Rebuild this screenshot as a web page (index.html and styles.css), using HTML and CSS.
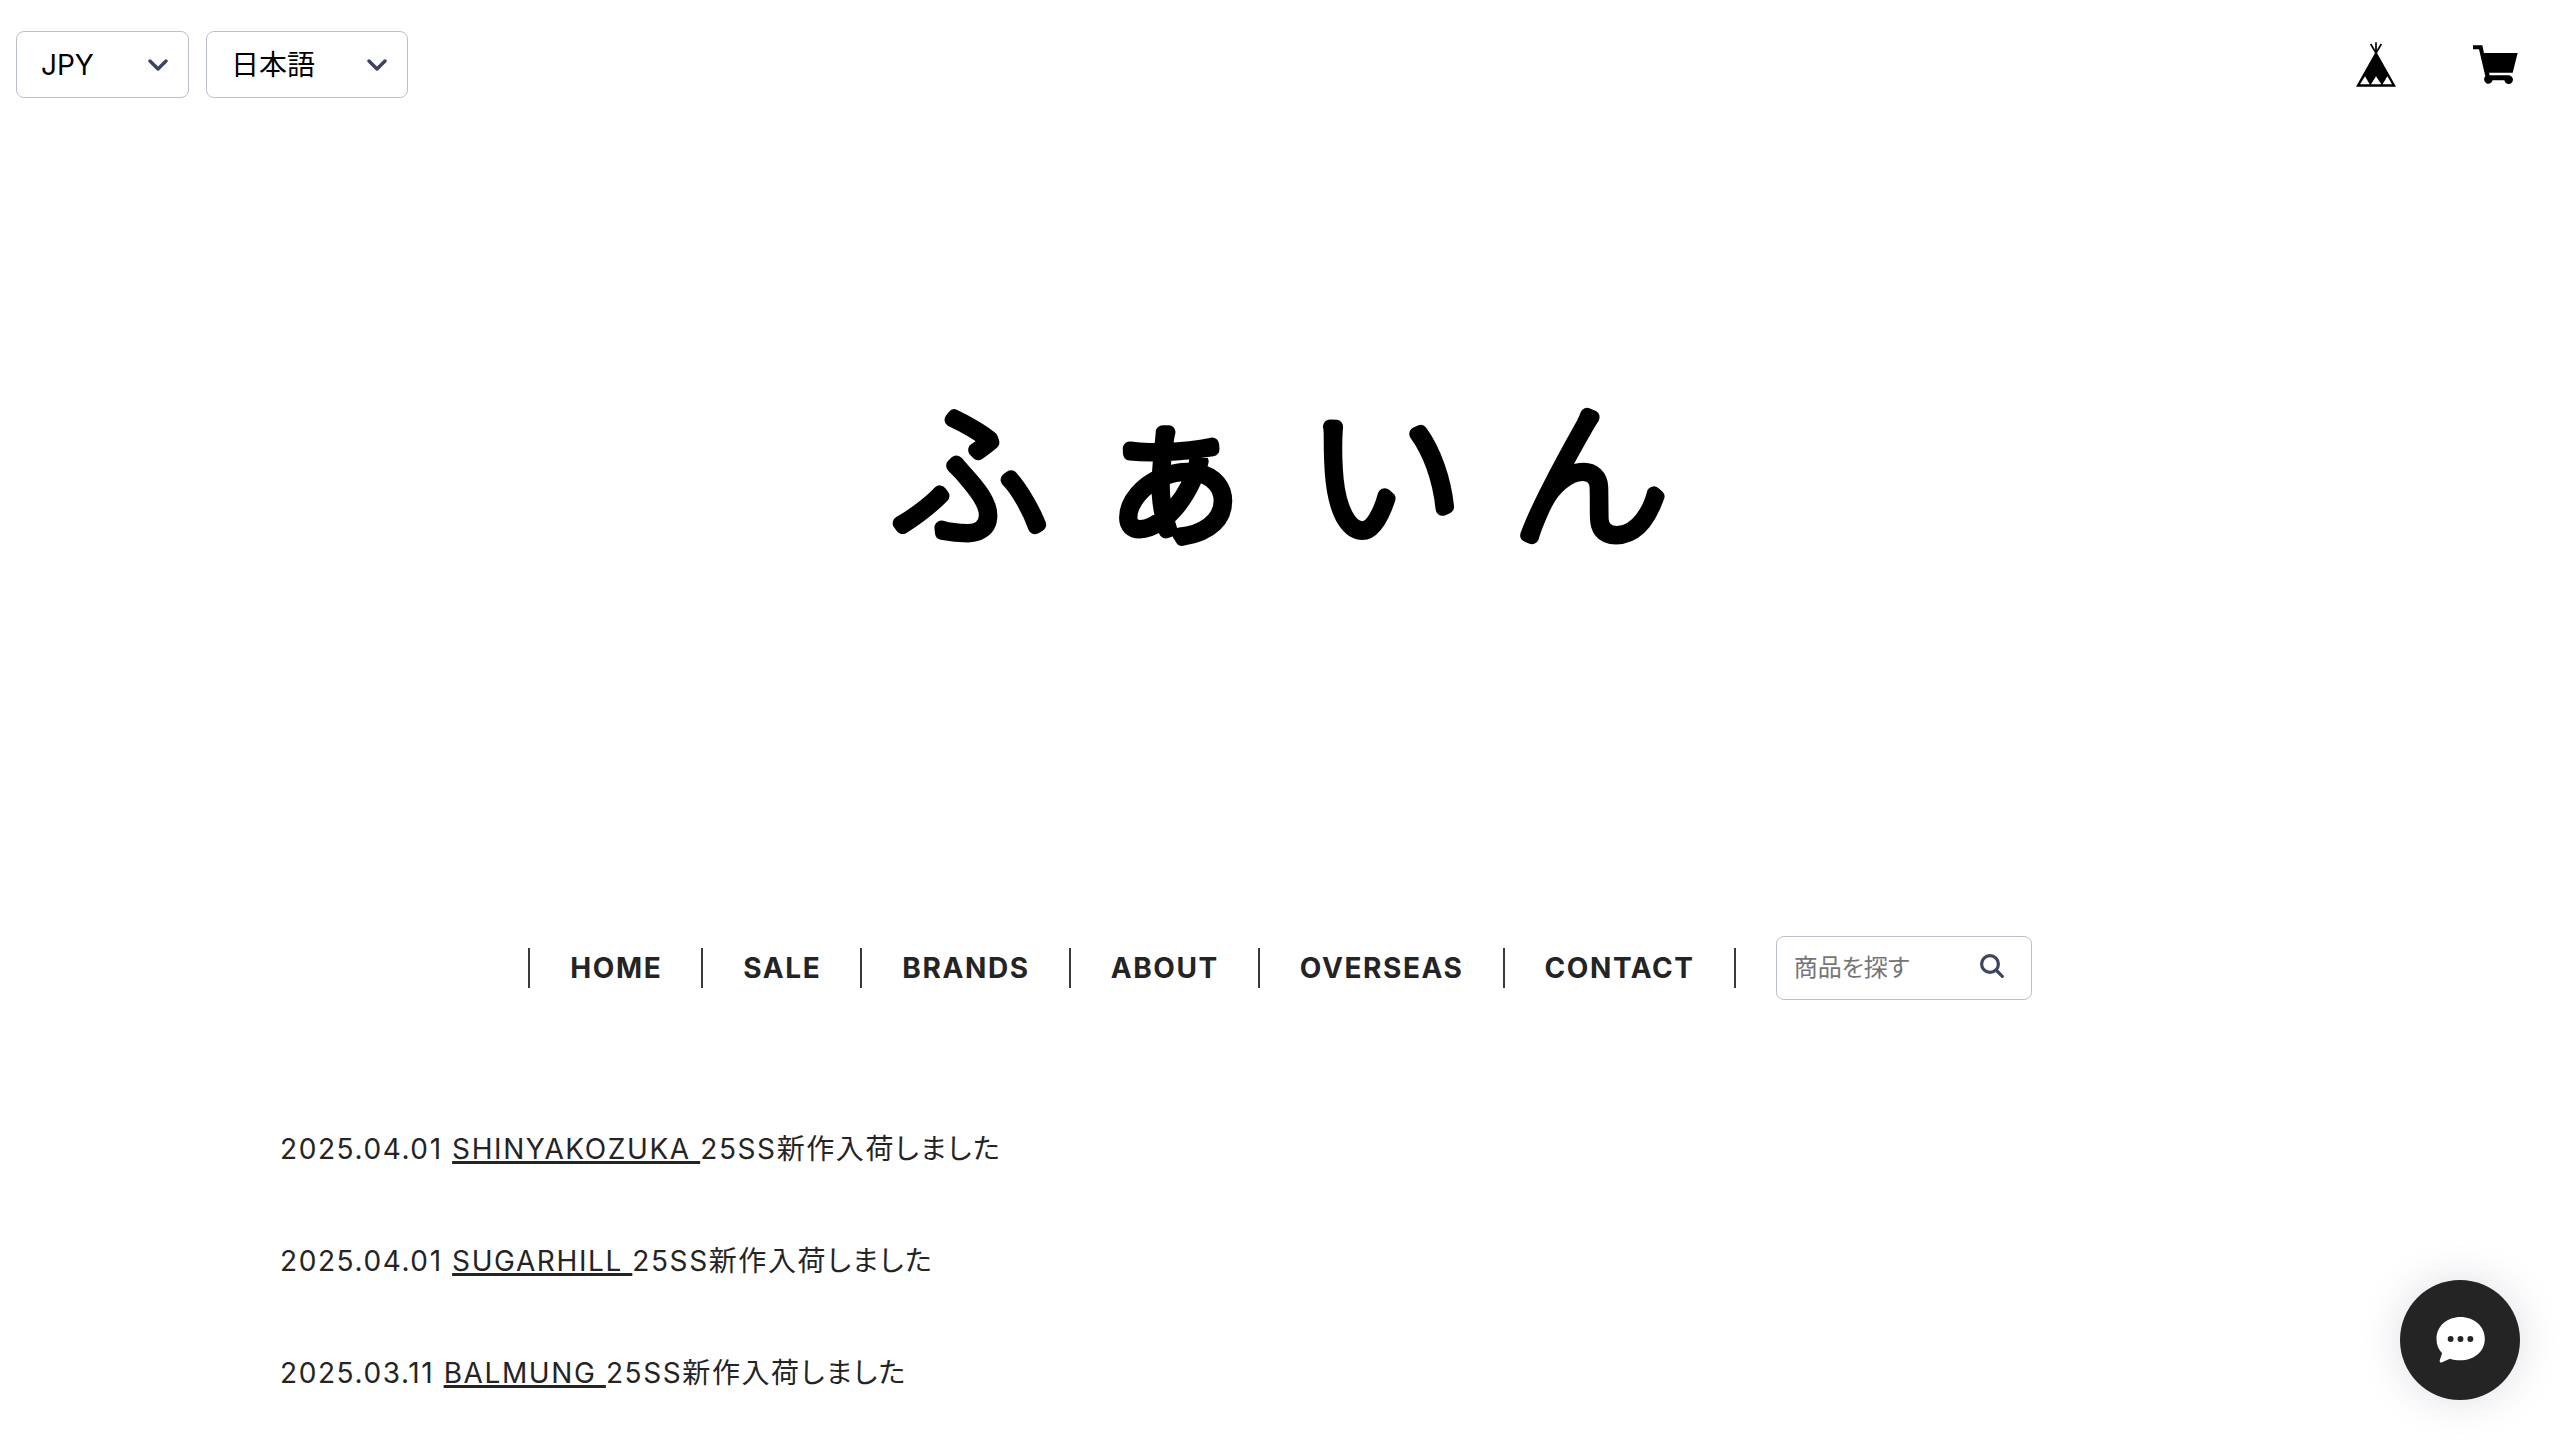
FILE: index.html
```html
<!DOCTYPE html>
<html lang="ja">
<head>
<meta charset="utf-8">
<meta name="viewport" content="width=device-width, initial-scale=1">
<title>ふぁいん</title>
<link rel="stylesheet" href="styles.css">
</head>
<body>
<header class="topbar">
  <div class="pickers">
    <div class="picker">
      <select class="picker-select picker-currency" aria-label="通貨"><option>JPY</option></select>
      <svg class="chevron" viewBox="0 0 20 12" aria-hidden="true"><path d="M2 2l8 8 8-8"/></svg>
    </div>
    <div class="picker">
      <select class="picker-select picker-language" aria-label="言語"><option>日本語</option></select>
      <svg class="chevron" viewBox="0 0 20 12" aria-hidden="true"><path d="M2 2l8 8 8-8"/></svg>
    </div>
  </div>
  <div class="shortcuts">
    <a href="#" aria-label="BASE"><svg class="tent" viewBox="106 65 120 135" aria-hidden="true">
      <path fill-rule="evenodd" d="M166 93L226 199H106ZM118 192H147L133 168ZM151 192H182L166 168ZM186 192H214L200 168Z"/>
      <path class="poles" d="M166 66V98M150 71L166 98L182 71"/>
    </svg></a>
    <a href="#" aria-label="カート"><svg class="cart" viewBox="459 74 135 117" aria-hidden="true">
      <path d="M459 75H487L492 98H593L578 157H507L509 165H564A13 13 0 1 1 553 180H518A13 13 0 1 1 496 168L477 87H459Z"/>
    </svg></a>
  </div>
</header>

<h1 class="logo">
  <a href="#"><svg class="logo-mark" viewBox="0 0 800 240">
    <text y="183" x="11 215 427 632">ふぁいん</text>
  </svg></a>
</h1>

<div class="menu">
  <nav>
    <ul class="menu-list">
      <li><a href="#">HOME</a></li>
      <li><a href="#">SALE</a></li>
      <li><a href="#">BRANDS</a></li>
      <li><a href="#">ABOUT</a></li>
      <li><a href="#">OVERSEAS</a></li>
      <li><a href="#">CONTACT</a></li>
    </ul>
  </nav>
  <form class="search">
    <input class="search-input" type="search" placeholder="商品を探す" aria-label="商品を探す">
    <button class="search-button" type="submit" aria-label="検索"><svg class="search-icon" viewBox="0 0 24 24" aria-hidden="true"><circle cx="10" cy="10" r="8.4"/><path d="M16.5 16.5L22.3 22.3"/></svg></button>
  </form>
</div>

<main class="news">
  <p>2025.04.01 <a href="#">SHINYAKOZUKA </a>25SS新作入荷しました</p>
  <p>2025.04.01 <a href="#">SUGARHILL </a>25SS新作入荷しました</p>
  <p>2025.03.11 <a href="#">BALMUNG </a>25SS新作入荷しました</p>
</main>

<button class="chat" type="button" aria-label="チャット"><svg class="chat-icon" viewBox="194 198 148 140" aria-hidden="true">
  <path class="bubble" d="M268 198C308 198 342 225 342 265C342 304 308 330 268 330C256 330 245 328 236 325L212 336Q203 339 205 330L212 308C201 297 195 283 195 265C195 225 228 198 268 198Z"/>
  <g class="dots"><circle cx="238" cy="265" r="9"/><circle cx="268" cy="265" r="9"/><circle cx="298" cy="265" r="9"/></g>
</svg></button>
</body>
</html>
```
FILE: styles.css
```css
* { box-sizing: border-box; }

body {
  margin: 0;
  background: #fff;
  color: #242424;
  font: 28px/56px Inter, "Noto Sans CJK JP", sans-serif;
  font-feature-settings: "palt";
}

a { color: inherit; }

.topbar {
  display: flex;
  justify-content: space-between;
  padding: 31px 42px 0 16px;
}

.pickers { display: flex; gap: 17px; }

.picker { display: grid; align-items: center; }

.picker > * { grid-area: 1 / 1; }

.picker-select {
  appearance: none;
  height: 67px;
  padding: 0 24px;
  border: 1px solid #b9bfcd;
  border-radius: 8px;
  background: #fff;
  color: #000;
  font: inherit;
  font-feature-settings: normal;
  line-height: 40px;
}

.picker-currency { width: 173px; }
.picker-language { width: 202px; }

.chevron {
  justify-self: end;
  width: 20px;
  height: 12px;
  margin-right: 21px;
  fill: none;
  stroke: #3b4560;
  stroke-width: 3.4;
  stroke-linecap: round;
  stroke-linejoin: round;
  pointer-events: none;
}

.shortcuts {
  display: flex;
  align-items: center;
  gap: 77px;
}

.shortcuts a { display: flex; }

.tent { width: 40px; height: 45px; }
.poles { fill: none; stroke: #000; stroke-width: 5; }
.cart { width: 45px; height: 39px; }

.logo {
  display: flex;
  justify-content: center;
  margin: 0;
  padding: 252px 0 346px;
}

.logo a { display: flex; }

.logo-mark {
  width: 800px;
  height: 240px;
  fill: #000;
  stroke: #000;
  stroke-width: 14;
  stroke-linejoin: round;
  font: 100 156px "Noto Sans CJK JP", sans-serif;
  font-feature-settings: normal;
}

.menu {
  display: flex;
  justify-content: center;
  align-items: center;
  gap: 40px;
}

.menu-list {
  display: flex;
  margin: 0;
  padding: 0;
  border-left: 2px solid #3a3a3a;
  list-style: none;
  font-weight: 700;
  line-height: 40px;
  letter-spacing: 0.057em;
}

.menu-list li { padding: 0 39px 0 40px; border-right: 2px solid #3a3a3a; }

.menu-list a { text-decoration: none; }

.search {
  display: flex;
  align-items: center;
  width: 256px;
  height: 64px;
  padding: 0 27px 0 17px;
  border: 1px solid #b9bfcd;
  border-radius: 8px;
}

.search-input {
  flex: 1;
  min-width: 0;
  height: 40px;
  padding: 0;
  border: 0;
  outline: 0;
  background: none;
  color: #000;
  font: 24px/40px Inter, "Noto Sans CJK JP", sans-serif;
  font-feature-settings: "palt";
}

.search-input::placeholder { color: #757575; }

.search-button { padding: 0; border: 0; background: none; }

.search-icon {
  display: block;
  width: 24px;
  height: 24px;
  margin-bottom: 4px;
  fill: none;
  stroke: #3b4560;
  stroke-width: 3.2;
  stroke-linecap: round;
}

.news {
  margin: 0 280px;
  padding-top: 121px;
  letter-spacing: 0.057em;
}

.news p { margin: 0 0 56px; }

.news p:last-child { margin-bottom: 0; }

.news a { text-decoration-thickness: 3px; }

.chat {
  position: fixed;
  right: 40px;
  bottom: 40px;
  display: grid;
  place-items: center;
  width: 120px;
  height: 120px;
  padding: 0;
  border: 0;
  border-radius: 50%;
  background: #242424;
  box-shadow: 0 0 40px rgba(36, 50, 80, 0.16);
}

.chat-icon { width: 49px; height: 46px; }
.bubble { fill: #fff; }
.dots { fill: #242424; }
```
